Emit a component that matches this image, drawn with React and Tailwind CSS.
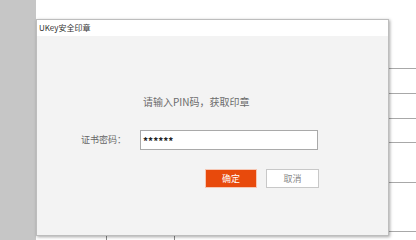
const font = { fontFamily: '"Microsoft YaHei", "Noto Sans CJK SC", "Liberation Sans", sans-serif' };

function App() {
  return (
    <div className="flex h-[240px] w-[416px] overflow-hidden bg-white" style={font}>
      <div className="h-full w-[36px] shrink-0 bg-[#c6c6c6]" />
      <div className="relative flex-1">
        {/* table behind the dialog */}
        <div className="absolute left-[353px] right-0 top-[68px] border-t border-[#a8a8a8]" />
        <div className="absolute left-[353px] right-0 top-[93px] border-t border-[#a8a8a8]" />
        <div className="absolute left-[353px] right-0 top-[118px] border-t border-[#a8a8a8]" />
        <div className="absolute left-[353px] right-0 top-[142px] border-t border-[#a8a8a8]" />
        <div className="absolute left-[353px] right-0 top-[182px] border-t border-[#a8a8a8]" />
        <div className="absolute left-[353px] right-0 top-[231px] border-t border-[#a8a8a8]" />
        <div className="absolute left-[70px] top-[236px] h-[4px] border-l border-[#888]" />
        <div className="absolute left-[138px] top-[236px] h-[4px] border-l border-[#888]" />

        <div className="absolute left-0 top-[19px] flex h-[217px] w-[353px] flex-col border border-[#bdbdbd] bg-[#f3f3f3] shadow-[1px_1px_3px_rgba(0,0,0,0.35)]">
          <div className="flex h-[16px] items-center bg-white px-[2px] text-[8px] leading-none text-[#333]">
            UKey安全印章
          </div>
          <div className="flex flex-1 flex-col">
            <div className="mt-[61px] pl-[106px] text-[10px] leading-none text-[#6b6b6b]">
              请输入PIN码，获取印章
            </div>
            <div className="mt-[23px] flex items-center">
              <span className="ml-[44px] w-[59px] text-[9px] text-[#666]">证书密码：</span>
              <div className="flex h-[20px] w-[178px] items-center border border-[#a9a9a9] bg-white px-[2px] text-[10px] font-bold text-[#222]">
                ******
              </div>
            </div>
            <div className="mt-[19px] flex gap-[9px] pl-[168px]">
              <button className="h-[19px] w-[52px] border border-[#f6c7b4] bg-[#e84a0c] text-[9px] text-white">
                确定
              </button>
              <button className="h-[19px] w-[53px] border border-[#c8c8c8] bg-white text-[9px] text-[#888]">
                取消
              </button>
            </div>
          </div>
        </div>
      </div>
    </div>
  );
}

export default App;
